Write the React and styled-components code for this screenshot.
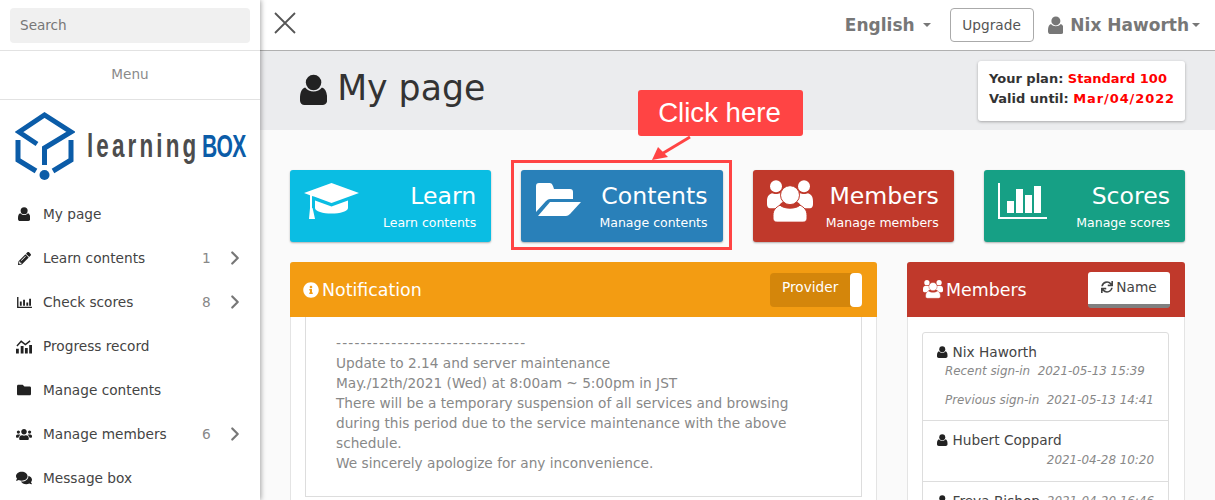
import React from "react";
import styled, { createGlobalStyle } from "styled-components";
import { FaPencilAlt, FaFolder, FaUsers, FaComments, FaInfoCircle, FaSync } from "react-icons/fa";
import { ChevronRight } from "lucide-react";

const FONT = `"DejaVu Sans", "Noto Sans", sans-serif`;

const GlobalStyle = createGlobalStyle`
  html, body { margin: 0; padding: 0; background: #fafafa; }
  * { box-sizing: border-box; }
`;

const Shell = styled.div`
  position: relative;
  display: flex;
  width: 1215px;
  height: 500px;
  overflow: hidden;
  font-family: ${FONT};
  color: #333;
`;

const Sidebar = styled.aside`
  flex: 0 0 260px;
  min-width: 0;
  background: #fff;
  box-shadow: 1px 0 5px rgba(0, 0, 0, 0.35);
  z-index: 2;
`;

const SearchRow = styled.div`
  height: 51px;
  padding: 8px 10px 7px;
  border-bottom: 1px solid #e2e2e2;
`;

const SearchBox = styled.div`
  height: 35px;
  line-height: 34px;
  padding-left: 10px;
  border-radius: 4px;
  background: #f0f0f0;
  color: #777;
  font-size: 13.6px;
`;

const MenuLabel = styled.div`
  height: 49px;
  line-height: 46px;
  text-align: center;
  font-size: 13.6px;
  color: #8a8a8a;
  border-bottom: 1px solid #e2e2e2;
`;

const Logo = styled.div`
  display: flex;
  align-items: center;
  height: 92px;
  padding-left: 15px;
`;

const LogoSvg = styled.svg`
  flex: none;
`;

const LogoWord = styled.span`
  flex: none;
  margin-left: 12px;
  font-family: "Liberation Sans", sans-serif;
  font-weight: 700;
  font-size: 33px;
  line-height: 40px;
  letter-spacing: 4.6px;
  color: #4d4d4d;
  transform: scaleX(0.68);
  transform-origin: left center;
  white-space: nowrap;
  span { color: #0b5ca8; margin-left: 4px; letter-spacing: -1px; font-size: 31px; }
`;

const NavItem = styled.div`
  display: flex;
  align-items: center;
  height: 44px;
  padding: 0 14px 0 16px;
  font-size: 13.7px;
  color: #444;
`;

const NavIcon = styled.span`
  display: flex;
  justify-content: center;
  width: 16px;
  margin-right: 11px;
  color: #222;
  font-size: 14px;
`;

const NavText = styled.span`
  flex: 1;
`;

const NavCount = styled.span`
  width: 20px;
  color: #888;
  text-align: left;
`;

const NavChevron = styled(ChevronRight)`
  color: #777;
  margin-left: 2px;
`;

const Main = styled.main`
  flex: 1;
  min-width: 0;
`;

const TopBar = styled.header`
  display: flex;
  align-items: center;
  height: 51px;
  padding: 0 15px 1px 14px;
  background: #fff;
  border-bottom: 1px solid #b0b0b0;
`;

const CloseIcon = styled.svg`
  color: #555;
  margin: -4px auto 0 0;
`;

const TopLink = styled.span`
  display: flex;
  align-items: center;
  font-size: 17px;
  font-weight: 700;
  color: #777;
`;

const TopName = styled.span`
  margin-left: 7px;
`;

const Caret = styled.i`
  display: inline-block;
  margin-left: ${(p) => p.$gap}px;
  border-top: 4px solid #777;
  border-left: 4px solid transparent;
  border-right: 4px solid transparent;
`;

const UpgradeButton = styled.button`
  width: 84px;
  height: 34px;
  margin: 0 14px 0 19px;
  padding: 0;
  border: 1px solid #aaa;
  border-radius: 4px;
  background: #fff;
  color: #555;
  font-family: inherit;
  font-size: 13.7px;
`;

const TitleBand = styled.section`
  display: flex;
  align-items: center;
  justify-content: space-between;
  height: 79px;
  padding: 0 30px 0 40px;
  background: #ebecee;
`;

const PageTitle = styled.h1`
  display: flex;
  align-items: center;
  gap: 10px;
  margin: -2px 0 0;
  font-size: 34.7px;
  font-weight: 400;
  color: #333;
  svg { color: #222; }
`;

const PageTitleText = styled.span`
  padding-bottom: 4px;
`;

const PlanBox = styled.div`
  width: 207px;
  height: 60px;
  padding: 8px 11px;
  border-radius: 3px;
  background: #fff;
  box-shadow: 0 1px 3px rgba(0, 0, 0, 0.3);
  font-size: 13px;
  font-weight: 700;
  line-height: 20px;
  white-space: nowrap;
`;

const PlanValue = styled.b`
  color: #f00;
  font-weight: 700;
  letter-spacing: ${(p) => p.$spacing || 0}px;
`;

const Content = styled.div`
  padding: 40px 30px 0;
`;

const CardGrid = styled.div`
  display: grid;
  grid-template-columns: repeat(4, 1fr);
  gap: 30px;
`;

const Card = styled.div`
  display: flex;
  justify-content: space-between;
  height: 72px;
  padding: 10px 15px 0 14px;
  border-radius: 3px;
  background: ${(p) => p.$bg};
  color: #fff;
  box-shadow: 0 1px 2px rgba(0, 0, 0, 0.3);
`;

const CardIcon = styled.span`
  display: block;
  flex: none;
  margin-top: ${(p) => p.$top}px;
  margin-left: ${(p) => p.$left || 0}px;
  svg { display: block; }
`;

const CardText = styled.div`
  text-align: right;
  white-space: nowrap;
`;

const CardTitle = styled.div`
  font-size: 23.6px;
  line-height: 32px;
`;

const CardSub = styled.div`
  margin-top: 2px;
  font-size: 12.5px;
  line-height: 18px;
`;

const PanelRow = styled.div`
  display: grid;
  grid-template-columns: 587px 278px;
  gap: 30px;
  margin-top: 20px;
`;

const Panel = styled.section`
  background: #fff;
  border: 1px solid #e4e4e4;
  border-top: 0;
  border-radius: 3px 3px 0 0;
  height: 300px;
`;

const PanelHead = styled.div`
  display: flex;
  align-items: center;
  justify-content: space-between;
  height: 55px;
  margin: 0 -1px;
  padding: 0 15px 0 ${(p) => p.$left}px;
  border-radius: 3px 3px 0 0;
  background: ${(p) => p.$bg};
  color: #fff;
`;

const PanelTitle = styled.div`
  display: flex;
  align-items: center;
  gap: 3px;
  font-size: 17.4px;
`;

const Toggle = styled.div`
  display: flex;
  justify-content: space-between;
  width: 92px;
  height: 34px;
  border-radius: 4px;
  background: #d4860b;
  font-size: 13.7px;
  line-height: 29px;
  padding-left: 12px;
`;

const ToggleKnob = styled.i`
  width: 12px;
  border-radius: 4px;
  background: #fff;
`;

const NoticeBody = styled.div`
  height: 180px;
  margin: 0 14px;
  padding: 16px 30px 0;
  border: 1px solid #ddd;
  border-top: 0;
  font-size: 13.7px;
  line-height: 20px;
  color: #888;
`;

const DashLine = styled.div`
  letter-spacing: 1.2px;
  white-space: nowrap;
`;

const SortButton = styled.div`
  display: flex;
  align-items: center;
  justify-content: center;
  gap: 3px;
  width: 82px;
  height: 36px;
  padding-bottom: 2px;
  border-bottom: 4px solid #808080;
  border-radius: 3px;
  background: #fff;
  color: #444;
  font-size: 13.7px;
`;

const MemberList = styled.div`
  margin: 15px 15px 0 14px;
  border: 1px solid #ddd;
  border-radius: 3px;
`;

const MemberItem = styled.div`
  min-height: ${(p) => p.$h}px;
  padding: 9px 14px 0;
  border-bottom: 1px solid #ddd;
`;

const MemberName = styled.div`
  display: flex;
  align-items: center;
  gap: 5px;
  font-size: 13.7px;
  line-height: 20px;
  color: #444;
  svg { color: #222; }
`;

const SignIn = styled.div`
  margin-top: ${(p) => p.$top || 0}px;
  padding-left: ${(p) => (p.$right ? 0 : 8)}px;
  text-align: ${(p) => (p.$right ? "right" : "left")};
  font-size: 11.9px;
  font-style: italic;
  line-height: 18px;
  color: #888;
  white-space: pre;
`;

const MemberDate = styled.span`
  margin-left: auto;
  font-size: 11.9px;
  font-style: italic;
  color: #888;
`;

const Callout = styled.div`
  position: absolute;
  left: 638px;
  top: 90px;
  width: 165px;
  height: 46px;
  padding-right: 2px;
  border-radius: 3px;
  background: #ff4444;
  color: #fff;
  font-family: "Liberation Sans", sans-serif;
  font-size: 27.6px;
  line-height: 45px;
  text-align: center;
  z-index: 3;
`;

const Highlight = styled.div`
  position: absolute;
  left: 511px;
  top: 160px;
  width: 221px;
  height: 90px;
  border: 3px solid #ff4444;
  z-index: 3;
`;

const Arrow = styled.svg`
  position: absolute;
  left: 648px;
  top: 134px;
  z-index: 3;
`;

const UserIcon = ({ size }) => (
  <svg width={size * 0.875} height={size} viewBox="1.5 0 21 24" fill="currentColor">
    <circle cx="12" cy="6.5" r="6" />
    <path d="M5.5 10.5c1.6 2 3.9 3 6.5 3s4.900-1 6.500-3c2.600 1 4 3.500 4 8.500v1.500c0 2-1.500 3.500-3.500 3.500h-14C3 24 1.500 22.500 1.500 20.500V19c0-5 1.400-7.500 4-8.500z" />
  </svg>
);

const ChartIcon = () => (
  <svg width="15" height="13" viewBox="0 0 16 14" fill="currentColor">
    <path d="M0 1h1.500v10.500H16V13H0z" />
    <path d="M3 6h2v4.500H3zM6.500 4h2v6.500h-2zM10 7h2v3.500h-2zM13 3h2v7.500h-2z" />
  </svg>
);

const ProgressIcon = () => (
  <svg width="17" height="15" viewBox="0 0 17 15" fill="currentColor">
    <path d="M0 10h3v5H0zM5 7h3v8H5zM9.500 9h3v6h-3zM14 6h3v9h-3z" />
    <path d="M1 7l4.500-5 4.500 3.500 5-4" fill="none" stroke="currentColor" strokeWidth="1.500" />
  </svg>
);

const MembersIcon = ({ size, bg }) => (
  <svg width={size} height={size * 0.92} viewBox="0 0 46 42" fill="#fff">
    <circle cx="9" cy="6" r="6" />
    <circle cx="37" cy="6" r="6" />
    <path d="M0 21c0-5 2-7 5-8 2 1 6 1 8 0 3 2 3 6 4 8-4 2-5 4-6 7H3c-2 0-3-2-3-4zM46 21c0-5-2-7-5-8-2 1-6 1-8 0-3 2-3 6-4 8 4 2 5 4 6 7h8c2 0 3-2 3-4z" />
    <circle cx="23" cy="15" r="9.500" stroke={bg} strokeWidth="1" />
    <path d="M13 25c2 2 6 3 10 3s8-1 10-3c4 2 7 5 7 10v3c0 2.500-1.500 4-4 4H10c-2.500 0-4-1.500-4-4v-3c0-5 3-8 7-10z" stroke={bg} strokeWidth="1" />
  </svg>
);

const CapIcon = () => (
  <svg width="55" height="36" viewBox="0 0 55 36" fill="#fff">
    <path d="M27.500 0L55 10 27.500 20 10 13.500 8 13v12H6V12.300L0 10z" />
    <path d="M11 17.500l16.500 6 16.500-6V25c0 3.500-8 5.500-16.500 5.500S11 28.500 11 25z" />
    <path d="M6 25h2.500l1 4 1.500 7H5z" />
  </svg>
);

const FolderIcon = () => (
  <svg width="45" height="33" viewBox="0 0 45 33" fill="#fff">
    <path d="M0 3Q0 0 3 0H14Q16 0 17 3L18 6H34Q37 6 37 9V16H14Q12 16 10 18L0 29Z" />
    <path d="M14 19H45L34 31Q32 33 30 33H2Z" />
  </svg>
);

const ScoresIcon = () => (
  <svg width="49" height="36" viewBox="0 0 49 36" fill="#fff">
    <path d="M0 0h2v34h47v2H0z" />
    <path d="M9 18h7v12H9zM18 6h7v24h-7zM27 12h7v18h-7zM36 3h7v27h-7z" />
  </svg>
);

const LogoMark = () => (
  <LogoSvg width="60" height="68" viewBox="0 0 60 68" fill="none" stroke="#0b5ca8" strokeWidth="5">
    <path d="M22 32L4 20 29.500 3 56 20 29.500 36V53" />
    <path d="M3 28V48L21 59M56 28V48L38 59" />
    <circle cx="29.500" cy="63" r="5" fill="#0b5ca8" stroke="none" />
  </LogoSvg>
);

const CARDS = [
  { bg: "#0abde3", top: 3, icon: <CapIcon />, title: "Learn", sub: "Learn contents" },
  { bg: "#2980b9", top: 3, left: 1, icon: <FolderIcon />, title: "Contents", sub: "Manage contents" },
  { bg: "#c0392b", top: 0, icon: <MembersIcon size={46} bg="#c0392b" />, title: "Members", sub: "Manage members" },
  { bg: "#16a085", top: 3, icon: <ScoresIcon />, title: "Scores", sub: "Manage scores" },
];

const NAV = [
  { icon: <UserIcon size={14} />, label: "My page" },
  { icon: <FaPencilAlt size={13} />, label: "Learn contents", count: 1 },
  { icon: <ChartIcon />, label: "Check scores", count: 8 },
  { icon: <ProgressIcon />, label: "Progress record" },
  { icon: <FaFolder size={14} />, label: "Manage contents" },
  { icon: <FaUsers size={17} />, label: "Manage members", count: 6 },
  { icon: <FaComments size={16} />, label: "Message box" },
];

export default function App() {
  return (
    <Shell>
      <GlobalStyle />
      <Sidebar>
        <SearchRow>
          <SearchBox>Search</SearchBox>
        </SearchRow>
        <MenuLabel>Menu</MenuLabel>
        <Logo>
          <LogoMark />
          <LogoWord>
            learning<span>BOX</span>
          </LogoWord>
        </Logo>
        {NAV.map((item) => (
          <NavItem key={item.label}>
            <NavIcon>{item.icon}</NavIcon>
            <NavText>{item.label}</NavText>
            {item.count && <NavCount>{item.count}</NavCount>}
            {item.count && <NavChevron size={22} strokeWidth={2.4} />}
          </NavItem>
        ))}
      </Sidebar>
      <Main>
        <TopBar>
          <CloseIcon width="22" height="22" viewBox="0 0 22 22">
            <path d="M1 1L21 21M21 1L1 21" stroke="currentColor" strokeWidth="1.800" />
          </CloseIcon>
          <TopLink>
            English
            <Caret $gap={8} />
          </TopLink>
          <UpgradeButton>Upgrade</UpgradeButton>
          <TopLink>
            <UserIcon size={18} />
            <TopName>Nix Haworth</TopName>
            <Caret $gap={3} />
          </TopLink>
        </TopBar>
        <TitleBand>
          <PageTitle>
            <UserIcon size={31} />
            <PageTitleText>My page</PageTitleText>
          </PageTitle>
          <PlanBox>
            Your plan: <PlanValue>Standard 100</PlanValue>
            <br />
            Valid until: <PlanValue $spacing={0.9}>Mar/04/2022</PlanValue>
          </PlanBox>
        </TitleBand>
        <Content>
          <CardGrid>
            {CARDS.map((card) => (
              <Card key={card.title} $bg={card.bg}>
                <CardIcon $top={card.top} $left={card.left}>{card.icon}</CardIcon>
                <CardText>
                  <CardTitle>{card.title}</CardTitle>
                  <CardSub>{card.sub}</CardSub>
                </CardText>
              </Card>
            ))}
          </CardGrid>
          <PanelRow>
            <Panel>
              <PanelHead $bg="#f39c12" $left={13}>
                <PanelTitle>
                  <FaInfoCircle size={16} />
                  Notification
                </PanelTitle>
                <Toggle>
                  Provider
                  <ToggleKnob />
                </Toggle>
              </PanelHead>
              <NoticeBody>
                <DashLine>-------------------------------</DashLine>
                Update to 2.14 and server maintenance
                <br />
                May./12th/2021 (Wed) at 8:00am ~ 5:00pm in JST
                <br />
                There will be a temporary suspension of all services and browsing during this period due to the service maintenance with the above schedule.
                <br />
                We sincerely apologize for any inconvenience.
              </NoticeBody>
            </Panel>
            <Panel>
              <PanelHead $bg="#c0392b" $left={16}>
                <PanelTitle>
                  <MembersIcon size={20} bg="#c0392b" />
                  Members
                </PanelTitle>
                <SortButton>
                  <FaSync size={12} />
                  Name
                </SortButton>
              </PanelHead>
              <MemberList>
                <MemberItem $h={88}>
                  <MemberName>
                    <UserIcon size={12} />
                    Nix Haworth
                  </MemberName>
                  <SignIn>{"Recent sign-in  2021-05-13 15:39"}</SignIn>
                  <SignIn $top={11}>{"Previous sign-in  2021-05-13 14:41"}</SignIn>
                </MemberItem>
                <MemberItem $h={61}>
                  <MemberName>
                    <UserIcon size={12} />
                    Hubert Coppard
                  </MemberName>
                  <SignIn $right $top={1}>2021-04-28 10:20</SignIn>
                </MemberItem>
                <MemberItem $h={40}>
                  <MemberName>
                    <UserIcon size={12} />
                    Freya Bishop
                    <MemberDate>2021-04-20 16:46</MemberDate>
                  </MemberName>
                </MemberItem>
              </MemberList>
            </Panel>
          </PanelRow>
        </Content>
      </Main>
      <Callout>Click here</Callout>
      <Arrow width="50" height="30" viewBox="0 0 50 30">
        <path d="M42 3L12 21" stroke="#ff4444" strokeWidth="3" />
        <path d="M4 26L10 13 20 23z" fill="#ff4444" />
      </Arrow>
      <Highlight />
    </Shell>
  );
}
